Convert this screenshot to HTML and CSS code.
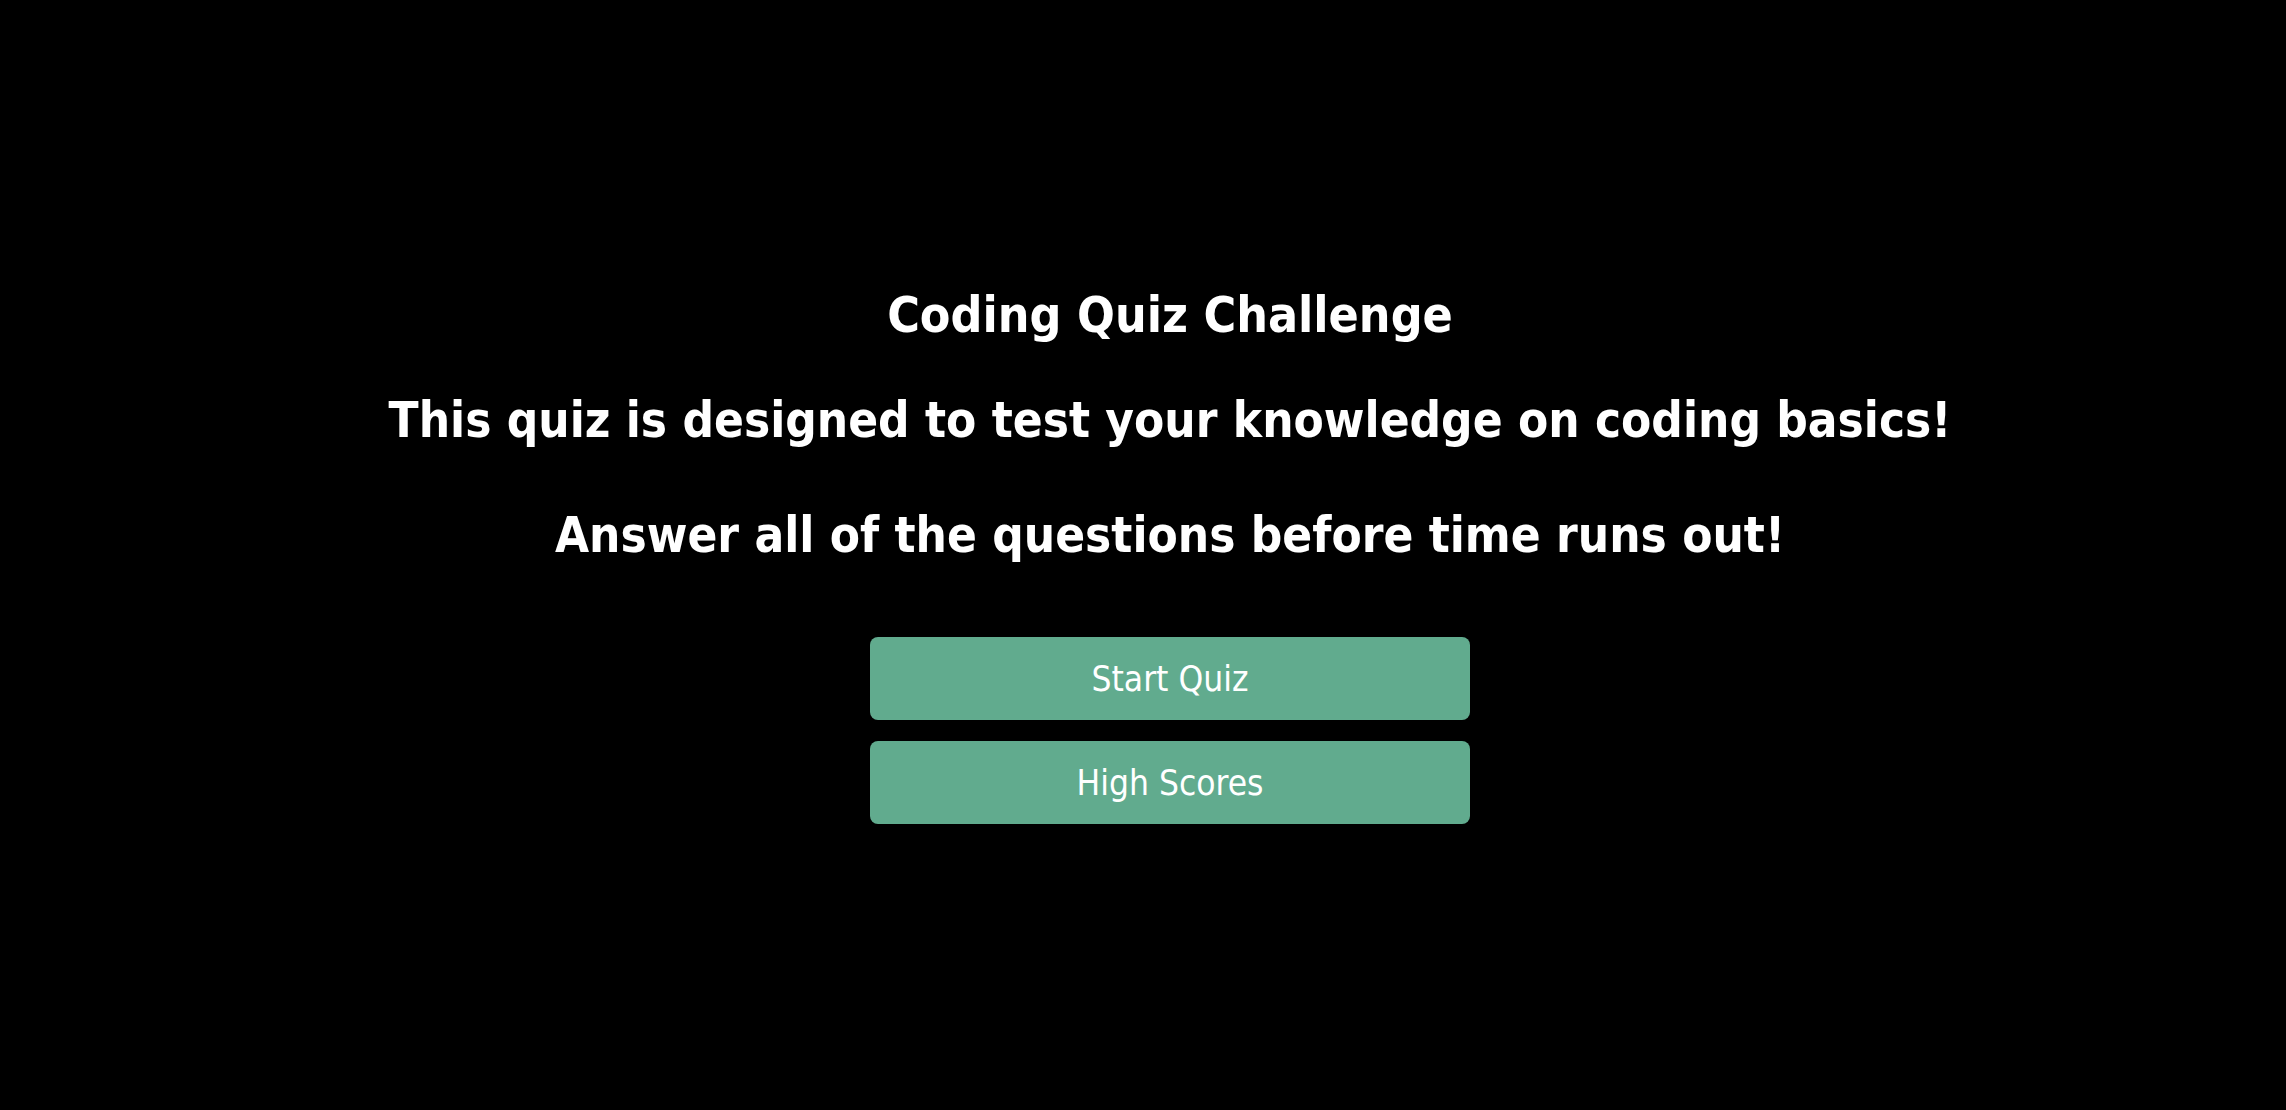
FILE: index.html
```html
<!DOCTYPE html>
<html lang="en">
<head>
<meta charset="utf-8">
<title>Coding Quiz Challenge</title>
<link rel="stylesheet" href="styles.css">
</head>
<body>
<main class="start">
  <h1 class="title">Coding Quiz Challenge</h1>
  <p class="intro intro-first">This quiz is designed to test your knowledge on coding basics!</p>
  <p class="intro intro-second">Answer all of the questions before time runs out!</p>
  <div class="actions">
    <button class="btn">Start Quiz</button>
    <button class="btn">High Scores</button>
  </div>
</main>
</body>
</html>
```
FILE: styles.css
```css
html, body {
  margin: 0;
  padding: 0;
  background: #000;
  height: 100%;
}
body {
  font-family: "DejaVu Sans Condensed", "DejaVu Sans", sans-serif;
  color: #fff;
}
.start {
  display: flex;
  flex-direction: column;
  align-items: center;
  padding-top: 287px;
  padding-left: 54px;
}
.title, .intro {
  margin: 0;
  font-size: 49px;
  line-height: 56px;
  font-weight: bold;
  text-align: center;
}
.title {
  font-size: 49.6px;
}
.intro-first {
  margin-top: 50px;
}
.intro-second {
  margin-top: 59px;
}
.actions {
  display: flex;
  flex-direction: column;
  gap: 21px;
  margin-top: 73px;
}
.btn {
  width: 600px;
  height: 83px;
  border: none;
  border-radius: 8px;
  background: #61ab8e;
  color: #fff;
  font-family: inherit;
  font-size: 35px;
  padding: 0;
}
```
